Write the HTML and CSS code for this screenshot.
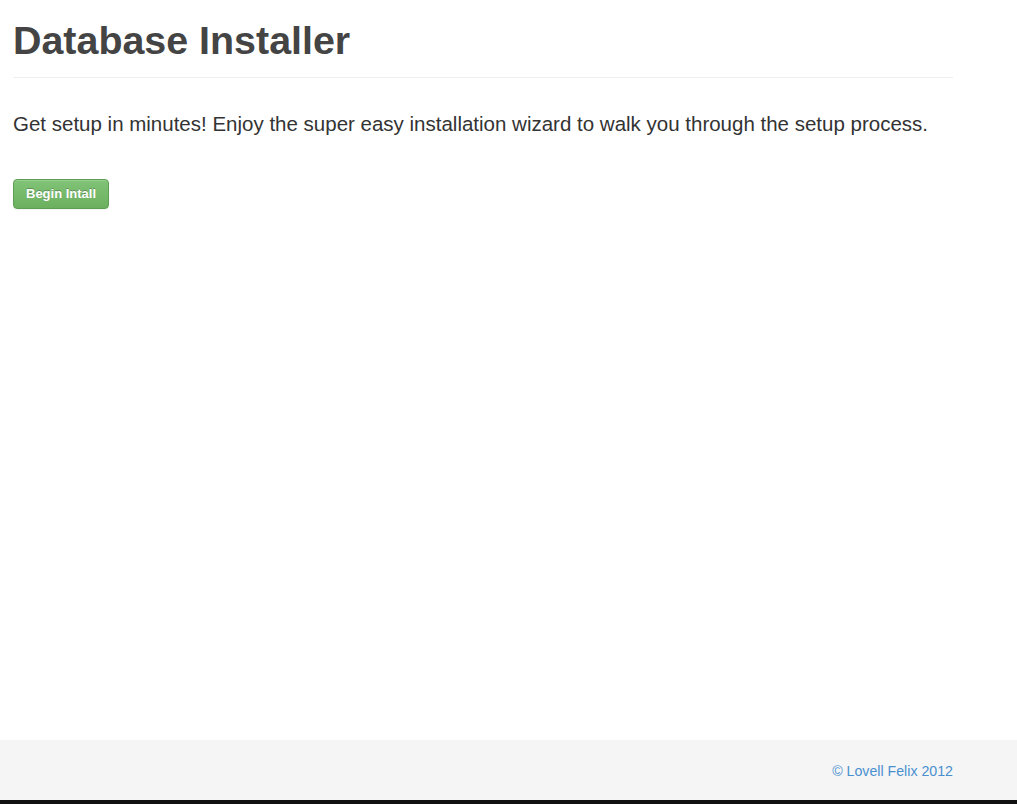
FILE: index.html
```html
<!DOCTYPE html>
<html>
<head>
<meta charset="utf-8">
<title>Database Installer</title>
<link rel="stylesheet" href="styles.css">
</head>
<body>
<div class="page">
  <main class="main">
    <div class="container">
      <div class="page-header">
        <h1>Database Installer</h1>
      </div>
      <p class="lead">Get setup in minutes! Enjoy the super easy installation wizard to walk you through the setup process.</p>
      <a class="btn btn-success" href="#">Begin Intall</a>
    </div>
  </main>
  <footer class="footer">
    <div class="container footer-inner">
      <p class="copy">© Lovell Felix 2012</p>
    </div>
  </footer>
  <div class="bottom-strip"></div>
</div>
</body>
</html>
```

FILE: styles.css
```css
html, body {
  margin: 0;
  padding: 0;
  background: #fff;
}
body {
  font-family: "Liberation Sans", Arial, Helvetica, sans-serif;
  color: #333;
}
.page {
  display: flex;
  flex-direction: column;
  min-height: 804px;
}
.main {
  flex: 1;
}
.container {
  width: 940px;
  margin-left: 13px;
}
.page-header {
  border-bottom: 1px solid #eee;
  padding-bottom: 11px;
  margin-top: 14px;
}
.page-header h1 {
  margin: 0;
  font-size: 39.4px;
  line-height: 52px;
  font-weight: bold;
  color: #444;
}
.lead {
  margin: 31px 0 40px;
  font-size: 20.5px;
  line-height: 30px;
  color: #333;
}
.btn {
  display: inline-block;
  box-sizing: border-box;
  height: 30px;
  padding: 0 12px;
  line-height: 28px;
  font-size: 13px;
  font-weight: bold;
  color: #fff;
  text-decoration: none;
  text-shadow: 0 -1px 0 rgba(0,0,0,0.25);
  border-radius: 4px;
}
.btn-success {
  background: linear-gradient(to bottom, #81c377, #6bb05f);
  border: 1px solid #5d9f52;
  box-shadow: inset 0 1px 0 rgba(255,255,255,0.2), 0 1px 2px rgba(0,0,0,0.05);
}
.footer {
  background: #f5f5f5;
  height: 60px;
}
.footer-inner {
  display: flex;
  justify-content: flex-end;
  align-items: center;
  height: 60px;
}
.copy {
  margin: 0;
  padding-top: 1px;
  font-size: 14.2px;
  color: #4a90d0;
}
.bottom-strip {
  height: 4px;
  background: #111;
}
```
